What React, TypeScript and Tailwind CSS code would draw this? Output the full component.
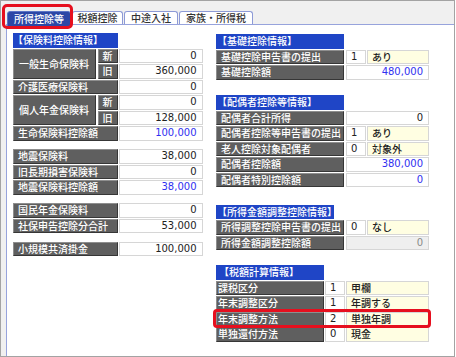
import React from "react";

const JP = "font-['Noto_Sans_CJK_JP',sans-serif]";
const NUM = "font-['DejaVu_Sans',sans-serif]";

const labelBase =
  "h-[14.5px] shrink-0 flex items-center bg-[#5f5f5f] border border-t-[#8e8e8e] border-l-[#8e8e8e] border-r-[#363636] border-b-[#363636] text-white text-[10px] font-medium leading-none whitespace-nowrap overflow-hidden " +
  JP;
const valueBase =
  "h-[14.5px] shrink-0 flex items-center border border-[#d6d6d6] text-[10px] leading-none whitespace-nowrap " +
  NUM;
const headerBase =
  "h-[14.5px] shrink-0 flex items-center bg-[#1f45c6] text-white text-[10px] font-medium leading-none whitespace-nowrap " +
  JP;

function Header({ w, pl, children }: { w: string; pl: string; children: React.ReactNode }) {
  return <div className={`${headerBase} ${w} ${pl}`}>{children}</div>;
}

function NumCell({ v, w, blue, grey }: { v: string; w: string; blue?: boolean; grey?: boolean }) {
  return (
    <div
      className={`${valueBase} ${w} justify-end pr-[5px] ${
        grey ? "bg-[#efefef] text-[#8a8a8a]" : blue ? "bg-white text-[#3030f0]" : "bg-white text-[#222222]"
      }`}
    >
      {v}
    </div>
  );
}

function CodeCell({ v }: { v: string }) {
  return <div className={`${valueBase} w-[20px] pl-[4px] bg-white text-[#222222]`}>{v}</div>;
}

function TextCell({ v, w }: { v: string; w: string }) {
  return (
    <div
      className={`h-[14.5px] shrink-0 flex items-center border border-[#d6d6d6] bg-[#fffee2] text-[#222222] text-[10px] font-medium leading-none whitespace-nowrap pl-[4px] ${w} ${JP}`}
    >
      {v}
    </div>
  );
}

/* ---------- left column rows ---------- */
function LSingle({ label, value, blue }: { label: string; value: string; blue?: boolean }) {
  return (
    <div className="flex gap-[1.5px]">
      <div className={`${labelBase} w-[104.5px] pl-[4px]`}>{label}</div>
      <NumCell v={value} w="w-[83.5px]" blue={blue} />
    </div>
  );
}

function LGroup({ label, values }: { label: string; values: [string, string] }) {
  return (
    <div className="flex gap-[1.5px]">
      <div className={`${labelBase} h-[30px] w-[83px] pl-[5px]`}>{label}</div>
      <div className="flex flex-col gap-[1px]">
        <div className="flex gap-[1.5px]">
          <div className={`${labelBase} w-[20px] justify-center`}>新</div>
          <NumCell v={values[0]} w="w-[83.5px]" />
        </div>
        <div className="flex gap-[1.5px]">
          <div className={`${labelBase} w-[20px] justify-center`}>旧</div>
          <NumCell v={values[1]} w="w-[83.5px]" />
        </div>
      </div>
    </div>
  );
}

/* ---------- right column rows ---------- */
function RNum({ label, value, blue, grey }: { label: string; value: string; blue?: boolean; grey?: boolean }) {
  return (
    <div className="flex gap-[2px]">
      <div className={`${labelBase} w-[128px] pl-[4px]`}>{label}</div>
      <NumCell v={value} w="w-[83px]" blue={blue} grey={grey} />
    </div>
  );
}

function RCode({ label, code, text }: { label: string; code: string; text: string }) {
  return (
    <div className="flex gap-[2px]">
      <div className={`${labelBase} w-[128px] pl-[4px]`}>{label}</div>
      <div className="flex gap-[1px]">
        <CodeCell v={code} />
        <TextCell v={text} w="w-[62px]" />
      </div>
    </div>
  );
}

function TCode({ label, code, text, mark }: { label: string; code: string; text: string; mark?: boolean }) {
  return (
    <div className="relative flex gap-[1.5px]">
      <div className={`${labelBase} w-[107.5px] pl-[1px]`}>{label}</div>
      <div className="flex gap-[1px]">
        <CodeCell v={code} />
        <TextCell v={text} w="w-[83px]" />
      </div>
      {mark && (
        <div className="pointer-events-none absolute -left-[3px] -right-[2px] -top-[3px] -bottom-[2px] z-10 rounded-[4px] border-[3px] border-[#e60f1e]" />
      )}
    </div>
  );
}

export default function App() {
  return (
    <div className="w-[456px] h-[357px] bg-white">
      <div className="relative w-[455px] h-[357px] border border-[#a3a3a3] bg-[#f0f0f0] flex flex-col">
        {/* tabs */}
        <div className={`h-[23px] shrink-0 flex items-end pl-[6px] gap-[1px] text-[10px] font-medium leading-none ${JP}`}>
          <div className="relative z-10 -mb-[3px] h-[16px] w-[64px] flex items-center justify-center rounded-t-[3px] border border-[#5b74c6] bg-[#2c47a6] text-white pb-[1px]">
            所得控除等
          </div>
          <div className="h-[13px] w-[51px] flex items-center justify-center rounded-t-[3px] border border-b-0 border-[#8d9ad6] bg-white text-[#333333]">
            税額控除
          </div>
          <div className="h-[13px] w-[54px] flex items-center justify-center rounded-t-[3px] border border-b-0 border-[#8d9ad6] bg-white text-[#333333]">
            中途入社
          </div>
          <div className="h-[13px] w-[74px] flex items-center justify-center rounded-t-[3px] border border-b-0 border-[#8d9ad6] bg-white text-[#333333]">
            家族・所得税
          </div>
        </div>

        {/* red highlight around active tab */}
        <div className="pointer-events-none absolute left-[1px] top-[3px] z-20 h-[25px] w-[71px] rounded-[5px] border-[3px] border-[#e60f1e]" />

        {/* panel */}
        <div className="flex-1 ml-[5px] border-l border-t border-[#97a3dc] bg-white pl-[6px] pt-[8px] flex gap-[13.5px]">
          {/* left column */}
          <div className="w-[189.5px] flex flex-col gap-[8.5px]">
            <div className="flex flex-col gap-[1px]">
              <Header w="w-[104.5px]" pl="pl-0">【保険料控除情報】</Header>
              <LGroup label="一般生命保険料" values={["0", "360,000"]} />
              <LSingle label="介護医療保険料" value="0" />
              <LGroup label="個人年金保険料" values={["0", "128,000"]} />
              <LSingle label="生命保険料控除額" value="100,000" blue />
            </div>
            <div className="flex flex-col gap-[1px]">
              <LSingle label="地震保険料" value="38,000" />
              <LSingle label="旧長期損害保険料" value="0" />
              <LSingle label="地震保険料控除額" value="38,000" blue />
            </div>
            <div className="flex flex-col gap-[1px]">
              <LSingle label="国民年金保険料" value="0" />
              <LSingle label="社保申告控除分合計" value="53,000" />
            </div>
            <div className="flex flex-col gap-[1px]">
              <LSingle label="小規模共済掛金" value="100,000" />
            </div>
          </div>

          {/* right column */}
          <div className="w-[213px] mt-[1px] flex flex-col">
            <div className="flex flex-col gap-[1px]">
              <Header w="w-[128px]" pl="pl-[1px]">【基礎控除情報】</Header>
              <RCode label="基礎控除申告書の提出" code="1" text="あり" />
              <RNum label="基礎控除額" value="480,000" blue />
            </div>
            <div className="mt-[15.5px] flex flex-col gap-[1px]">
              <Header w="w-[128px]" pl="pl-[1px]">【配偶者控除等情報】</Header>
              <RNum label="配偶者合計所得" value="0" />
              <RCode label="配偶者控除等申告書の提出" code="1" text="あり" />
              <RCode label="老人控除対象配偶者" code="0" text="対象外" />
              <RNum label="配偶者控除額" value="380,000" blue />
              <RNum label="配偶者特別控除額" value="0" blue />
            </div>
            <div className="mt-[17.5px] flex flex-col gap-[1px]">
              <Header w="w-[118px]" pl="pl-[1px]">【所得金額調整控除情報】</Header>
              <RCode label="所得調整控除申告書の提出" code="0" text="なし" />
              <RNum label="所得金額調整控除額" value="0" grey />
            </div>
            <div className="mt-[15px] flex flex-col gap-[1px]">
              <Header w="w-[108px]" pl="pl-[3px]">【税額計算情報】</Header>
              <TCode label="課税区分" code="1" text="甲欄" />
              <TCode label="年末調整区分" code="1" text="年調する" />
              <TCode label="年末調整方法" code="2" text="単独年調" mark />
              <TCode label="単独還付方法" code="0" text="現金" />
            </div>
          </div>
        </div>
      </div>
    </div>
  );
}
